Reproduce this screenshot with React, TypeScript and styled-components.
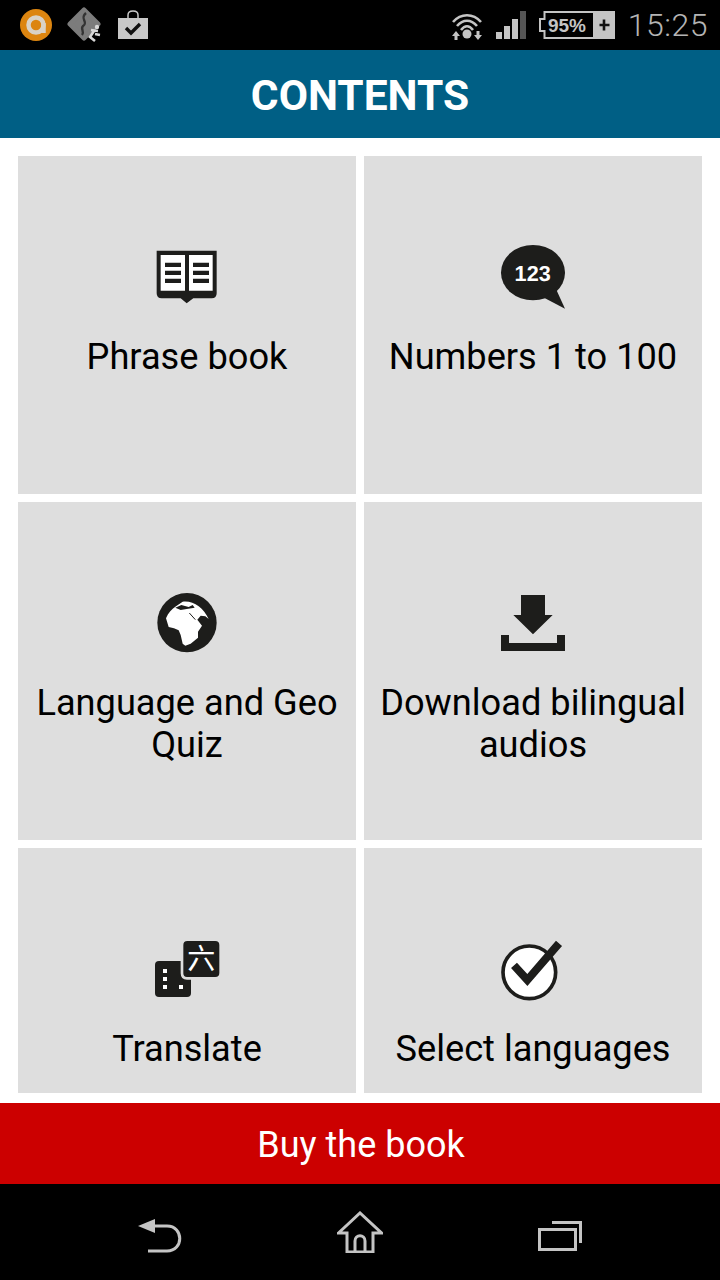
import styled, { createGlobalStyle } from 'styled-components';

const ICON = '#1d1d1b';
const CARD = '#dedede';
const BAR_ICON = '#c4c4c4';

const GlobalStyle = createGlobalStyle`
  html, body {
    margin: 0;
    padding: 0;
    background: #ffffff;
  }
  * {
    box-sizing: border-box;
  }
`;

function BookIcon() {
  return (
    <CardIcon viewBox="-9 0 300 240">
      <path
        fill={ICON}
        d="M50 47H230V175Q230 190 215 190H160L140 205L122 190H65Q50 190 50 175Z"
      />
      <path fill="#fff" d="M62 60H135V167H62ZM147 60H218V167H147Z" />
      <path
        fill={ICON}
        d="M75 83H123V96H75ZM75 107H123V120H75ZM75 131H123V144H75ZM159 83H207V96H159ZM159 107H207V120H159ZM159 131H207V144H159Z"
      />
    </CardIcon>
  );
}

function BubbleIcon() {
  return (
    <CardIcon viewBox="-6 0 300 240">
      <ellipse cx="144" cy="113" rx="96" ry="83" fill={ICON} />
      <path fill={ICON} d="M212 160L240 221L180 190Z" />
      <BubbleText x="143" y="138" textAnchor="middle">
        123
      </BubbleText>
    </CardIcon>
  );
}

function GlobeIcon() {
  return (
    <CardIcon viewBox="-9 -12 300 240">
      <circle cx="141" cy="113" r="89" fill={ICON} />
      <path
        fill="#fff"
        d="M78 100C84 84 96 72 108 64L128 50C160 46 190 68 206 102L196 94L182 92L172 104L186 122L174 140L174 158L152 176L136 182L128 176L122 150L116 136L102 130L86 126Z"
      />
      <path fill={ICON} d="M106 68L124 60L146 66L158 60L164 68L140 72L122 75Z" />
      <path fill="none" stroke={ICON} strokeWidth="3" d="M148 84L166 104" />
    </CardIcon>
  );
}

function DownloadIcon() {
  return (
    <CardIcon viewBox="-6 -12 300 240">
      <path fill={ICON} d="M108 30H180V90H203L144 148L85 90H108Z" />
      <path fill={ICON} d="M48 150H72V174H216V150H240V198H48Z" />
    </CardIcon>
  );
}

function TranslateIcon() {
  return (
    <CardIcon viewBox="-9 -9 300 240">
      <rect x="45" y="93" width="108" height="108" rx="12" fill={ICON} />
      <rect x="130" y="33" width="108" height="108" rx="12" fill={ICON} />
      <path
        fill="none"
        stroke={CARD}
        strokeWidth="8"
        d="M126 93V130Q126 145 141 145H153"
      />
      <path
        fill="#fff"
        d="M69 117H81V129H69ZM69 141H81V153H69ZM69 165H81V177H69ZM117 165H129V177H117Z"
      />
      <GlyphText x="184" y="118" textAnchor="middle">
        六
      </GlyphText>
    </CardIcon>
  );
}

function CheckIcon() {
  return (
    <CardIcon viewBox="-6 -9 300 240">
      <circle cx="133" cy="127" r="79" fill="#fff" stroke={ICON} strokeWidth="11" />
      <path
        fill="none"
        stroke={ICON}
        strokeWidth="24"
        d="M87 106L127 150L222 40"
      />
    </CardIcon>
  );
}

const items = [
  { label: 'Phrase book', icon: <BookIcon /> },
  { label: 'Numbers 1 to 100', icon: <BubbleIcon /> },
  { label: 'Language and Geo Quiz', icon: <GlobeIcon /> },
  { label: 'Download bilingual audios', icon: <DownloadIcon /> },
  { label: 'Translate', icon: <TranslateIcon /> },
  { label: 'Select languages', icon: <CheckIcon /> },
];

export default function App(): JSX.Element {
  return (
    <Screen>
      <GlobalStyle />
      <StatusBar>
        <NotifyIcons>
          <svg width="34" height="34" viewBox="0 0 34 34">
            <circle cx="17" cy="17" r="16" fill="#dc8510" />
            <circle cx="17" cy="17" r="7.500" fill="none" stroke="#d9d2c6" strokeWidth="4.500" />
            <path d="M24.500 15V25" stroke="#d9d2c6" strokeWidth="4.500" />
          </svg>
          <svg width="36" height="36" viewBox="0 0 36 36">
            <path d="M17 3L31 17L17 31L3 17Z" fill="#7c7c7c" stroke="#7c7c7c" strokeWidth="5" strokeLinejoin="round" />
            <path d="M19 6C12 12 22 15 16 19C13 22 18 24 15 28" fill="none" stroke="#333" strokeWidth="2.400" />
            <path d="M24 23L31 24M27 24L23 30L28 34M28 27L33 28" fill="none" stroke="#d8d8d8" strokeWidth="2.600" />
            <circle cx="30" cy="20" r="2.200" fill="#d8d8d8" />
          </svg>
          <svg width="32" height="32" viewBox="0 0 32 32">
            <path d="M11 9V6Q11 2 16 2T21 6V9" fill="none" stroke="#c8c8c8" strokeWidth="1.500" />
            <path d="M1 9H31V30H1Z" fill="#c8c8c8" />
            <path d="M9 19L14 24L23 15" fill="none" stroke="#111" strokeWidth="3.400" />
          </svg>
        </NotifyIcons>
        <SystemIcons>
          <svg width="32" height="30" viewBox="0 0 32 30">
            <path
              d="M2 12C10 3 22 3 30 12M6 16C12 9 20 9 26 16M10 20C14 15 18 15 22 20"
              fill="none"
              stroke={BAR_ICON}
              strokeWidth="2.600"
            />
            <circle cx="16" cy="24" r="4.500" fill={BAR_ICON} />
            <path d="M5 21L9 26H6.500V30H3.500V26H1ZM27 30L31 25H28.500V21H25.500V25H23Z" fill={BAR_ICON} />
          </svg>
          <svg width="30" height="28" viewBox="0 0 30 28">
            <path d="M0 21H6V28H0ZM8 15H14V28H8ZM16 8H22V28H16Z" fill={BAR_ICON} />
            <path d="M24 0H30V28H24Z" fill="#555" />
          </svg>
          <svg width="76" height="28" viewBox="0 0 76 28">
            <path
              d="M5.500 1H55V27H5.500V20H1V8H5.500Z"
              fill="none"
              stroke={BAR_ICON}
              strokeWidth="2"
            />
            <path d="M56 0H76V28H56Z" fill={BAR_ICON} />
            <path d="M65 8.500V19.500M60.500 14H70.500" stroke="#111" strokeWidth="2.600" />
            <BatteryText x="28" y="21" textAnchor="middle">
              95%
            </BatteryText>
          </svg>
          <Clock>15:25</Clock>
        </SystemIcons>
      </StatusBar>
      <Header>CONTENTS</Header>
      <Content>
        {items.map((item) => (
          <Card key={item.label}>
            {item.icon}
            <CardLabel>{item.label}</CardLabel>
          </Card>
        ))}
      </Content>
      <BuyBar>Buy the book</BuyBar>
      <NavBar>
        <NavButton $drop={7}>
          <svg width="46" height="34" viewBox="0 0 46 34">
            <path d="M1 7L18 0V14Z" fill={BAR_ICON} />
            <path d="M16 7H30C47 7 47 32 30 32H11" fill="none" stroke={BAR_ICON} strokeWidth="3" />
          </svg>
        </NavButton>
        <NavButton>
          <svg width="46" height="42" viewBox="0 0 46 42">
            <path
              d="M1.500 22L23 2L44.500 22H36V41H10V22Z"
              fill="none"
              stroke={BAR_ICON}
              strokeWidth="3"
            />
            <path d="M18 41V30C18 23 28 23 28 30V41" fill="none" stroke={BAR_ICON} strokeWidth="3" />
          </svg>
        </NavButton>
        <NavButton $drop={8}>
          <svg width="44" height="30" viewBox="0 0 44 30">
            <path d="M1.500 8.500H37.500V28.500H1.500Z" fill="none" stroke={BAR_ICON} strokeWidth="3" />
            <path d="M14 1.500H42.500V22" fill="none" stroke={BAR_ICON} strokeWidth="3" />
          </svg>
        </NavButton>
      </NavBar>
    </Screen>
  );
}

const Screen = styled.div`
  display: flex;
  flex-direction: column;
  width: 720px;
  height: 1280px;
  overflow: hidden;
  background: #ffffff;
  font-family: Roboto, 'Liberation Sans', sans-serif;
`;

const StatusBar = styled.div`
  display: flex;
  justify-content: space-between;
  align-items: center;
  height: 50px;
  padding: 0 12px 0 19px;
  background: #000000;
`;

const NotifyIcons = styled.div`
  display: flex;
  align-items: center;
  gap: 14px;
`;

const SystemIcons = styled.div`
  display: flex;
  align-items: center;
  gap: 13px;
`;

const BatteryText = styled.text`
  fill: ${BAR_ICON};
  font-family: 'Liberation Sans', sans-serif;
  font-size: 19px;
  font-weight: 700;
`;

const Clock = styled.div`
  color: #b4b4b4;
  font-size: 32px;
  font-weight: 300;
  letter-spacing: 0.5px;
`;

const Header = styled.h1`
  display: flex;
  align-items: center;
  justify-content: center;
  flex: none;
  height: 88px;
  margin: 0;
  padding-top: 2px;
  background: #005f85;
  color: #ffffff;
  font-size: 42.5px;
  font-weight: 700;
`;

const Content = styled.div`
  display: grid;
  flex: 1;
  min-height: 0;
  grid-template-columns: 338px 338px;
  grid-template-rows: 338px 338px 1fr;
  gap: 8px;
  padding: 18px 18px 10px;
`;

const Card = styled.div`
  display: flex;
  flex-direction: column;
  align-items: center;
  padding: 79px 8px 0;
  background: ${CARD};
  overflow: hidden;
`;

const CardIcon = styled.svg`
  flex: none;
  width: 100px;
  height: 80px;
  margin-bottom: 21px;
`;

const CardLabel = styled.div`
  color: #000000;
  font-size: 36.2px;
  line-height: 42px;
  text-align: center;
`;

const BubbleText = styled.text`
  fill: #ffffff;
  font-family: 'Liberation Sans', sans-serif;
  font-size: 65px;
  font-weight: 700;
  text-rendering: geometricPrecision;
`;

const GlyphText = styled.text`
  fill: #ffffff;
  font-family: 'Noto Sans CJK SC', sans-serif;
  font-size: 84px;
  font-weight: 400;
`;

const BuyBar = styled.div`
  display: flex;
  align-items: center;
  justify-content: center;
  flex: none;
  height: 81px;
  padding: 3px 0 0 2px;
  background: #cc0000;
  color: #ffffff;
  font-size: 36px;
`;

const NavBar = styled.div`
  display: flex;
  justify-content: center;
  flex: none;
  height: 96px;
  background: #000000;
`;

const NavButton = styled.div<{ $drop?: number }>`
  display: flex;
  align-items: center;
  justify-content: center;
  width: 200px;
  padding-top: ${(props) => props.$drop ?? 0}px;
`;
